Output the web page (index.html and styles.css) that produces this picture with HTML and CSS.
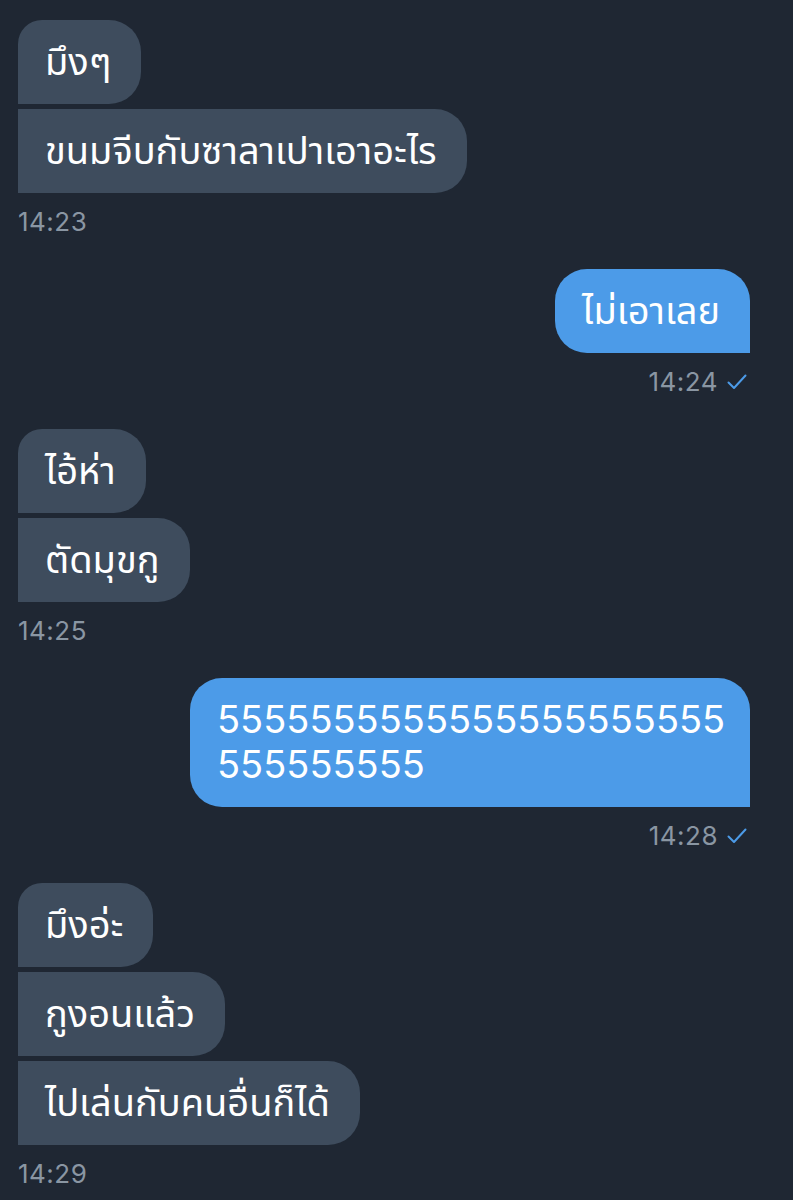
FILE: index.html
```html
<!DOCTYPE html>
<html lang="th">
<head>
<meta charset="utf-8">
<title>Chat</title>
<link rel="stylesheet" href="styles.css">
</head>
<body>
<div class="chat">
  <div class="group in">
    <div class="bubble first">มึงๆ</div>
    <div class="bubble last">ขนมจีบกับซาลาเปาเอาอะไร</div>
    <div class="time">14:23</div>
  </div>
  <div class="group out">
    <div class="bubble single">ไม่เอาเลย</div>
    <div class="time">14:24 <svg class="check" viewBox="0 0 20 16" width="20" height="16"><path d="M1.5 8.5 L7 14 L18.5 1.5" fill="none" stroke="currentColor" stroke-width="2" stroke-linecap="round" stroke-linejoin="round"/></svg></div>
  </div>
  <div class="group in">
    <div class="bubble first">ไอ้ห่า</div>
    <div class="bubble last">ตัดมุขกู</div>
    <div class="time">14:25</div>
  </div>
  <div class="group out">
    <div class="bubble single wide">5555555555555555555555555555555</div>
    <div class="time">14:28 <svg class="check" viewBox="0 0 20 16" width="20" height="16"><path d="M1.5 8.5 L7 14 L18.5 1.5" fill="none" stroke="currentColor" stroke-width="2" stroke-linecap="round" stroke-linejoin="round"/></svg></div>
  </div>
  <div class="group in">
    <div class="bubble first">มึงอ่ะ</div>
    <div class="bubble mid">กูงอนแล้ว</div>
    <div class="bubble last">ไปเล่นกับคนอื่นก็ได้</div>
    <div class="time">14:29</div>
  </div>
</div>
</body>
</html>
```

FILE: styles.css
```css
html, body {
  margin: 0;
  padding: 0;
  background: #1f2733;
}
body {
  font-family: "Inter", "Noto Sans Thai", "Noto Sans", "Liberation Sans", sans-serif;
  color: #ffffff;
}
.chat {
  display: flex;
  flex-direction: column;
  gap: 32px;
  padding: 20px 43px 20px 18px;
}
.group {
  display: flex;
  flex-direction: column;
  gap: 5px;
}
.group.in { align-items: flex-start; }
.group.out { align-items: flex-end; }
.bubble {
  font-size: 38px;
  line-height: 45px;
  padding: 19px 30px 20px 27px;
  border-radius: 32px;
  max-width: 504px;
  word-break: break-all;
}
.bubble.wide {
  width: 515px;
  max-width: 515px;
  padding-right: 18px;
}
.in .bubble { background: #3e4c5d; }
.out .bubble { background: #4c9be8; }
.in .bubble.first { border-bottom-left-radius: 0; border-top-left-radius: 24px; }
.in .bubble.mid { border-top-left-radius: 0; border-bottom-left-radius: 0; }
.in .bubble.last { border-top-left-radius: 0; border-bottom-left-radius: 0; }
.out .bubble.single { border-bottom-right-radius: 0; }
.time {
  margin-top: 9px;
  font-size: 26px;
  line-height: 30px;
  letter-spacing: 0.5px;
  color: #8a96a3;
  display: flex;
  align-items: center;
  gap: 9px;
}
.out .time { margin-right: 3px; }
.check { color: #4c9be8; }
```
